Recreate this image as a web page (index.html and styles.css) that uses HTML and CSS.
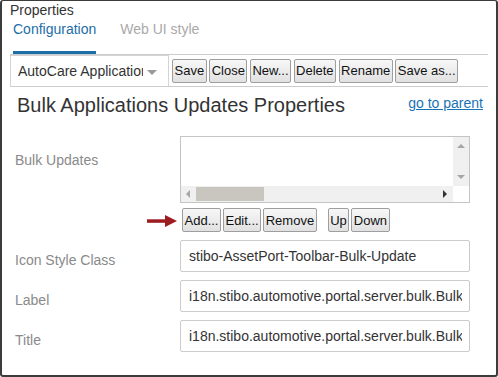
FILE: index.html
```html
<!DOCTYPE html>
<html lang="en">
<head>
    <meta charset="UTF-8">
    <meta name="viewport" content="width=device-width, initial-scale=1.0">
    <title>Properties</title>
    <link rel="stylesheet" href="styles.css">
</head>
<body>
    <div class="window">
        <div class="panel-title">Properties</div>

        <div class="tabs">
            <span class="tab active">Configuration</span>
            <span class="tab">Web UI style</span>
        </div>

        <div class="toolbar">
            <div class="dropdown">
                <span class="dropdown-text">AutoCare Applications</span>
                <span class="dropdown-arrow"></span>
            </div>
            <button class="btn">Save</button>
            <button class="btn">Close</button>
            <button class="btn">New...</button>
            <button class="btn">Delete</button>
            <button class="btn">Rename</button>
            <button class="btn">Save as...</button>
        </div>

        <div class="heading-row">
            <h1>Bulk Applications Updates Properties</h1>
            <a href="#" class="parent-link">go to parent</a>
        </div>

        <div class="form">
            <div class="form-row">
                <label class="field-label list-label">Bulk Updates</label>
                <div class="field">
                    <div class="listbox">
                        <div class="list-area"></div>
                        <div class="vscroll">
                            <span class="arrow arrow-up"></span>
                            <span class="arrow arrow-down"></span>
                        </div>
                        <div class="hscroll">
                            <span class="arrow arrow-left"></span>
                            <span class="thumb"></span>
                            <span class="arrow arrow-right"></span>
                        </div>
                        <div class="corner"></div>
                    </div>
                    <div class="list-buttons">
                        <button class="btn">Add...</button>
                        <button class="btn">Edit...</button>
                        <button class="btn">Remove</button>
                        <button class="btn btn-up">Up</button>
                        <button class="btn">Down</button>
                    </div>
                </div>
            </div>

            <div class="form-row">
                <label class="field-label">Icon Style Class</label>
                <input class="text-input" type="text" readonly value="stibo-AssetPort-Toolbar-Bulk-Update">
            </div>

            <div class="form-row">
                <label class="field-label">Label</label>
                <input class="text-input" type="text" readonly value="i18n.stibo.automotive.portal.server.bulk.BulkApplicationsUpdatesLabel">
            </div>

            <div class="form-row">
                <label class="field-label">Title</label>
                <input class="text-input" type="text" readonly value="i18n.stibo.automotive.portal.server.bulk.BulkApplicationsUpdatesTitle">
            </div>
        </div>

        <!-- annotation arrow pointing at Add... -->
        <svg class="pointer" width="30" height="12" viewBox="0 0 30 12">
            <rect x="0" y="4.3" width="20" height="3.5" fill="#9c1c20"/>
            <polygon points="18,0 30,6 18,12" fill="#9c1c20"/>
        </svg>
    </div>
</body>
</html>
```

FILE: styles.css
```css
:root {
    --blue: #1b6ea8;
    --line: #cccccc;
    --text: #333333;
    --label: #8a8a8a;
}

body {
    margin: 0;
    background: #ffffff;
}

.window {
    position: relative;
    width: 498px;
    height: 377px;
    box-sizing: border-box;
    border: 2px solid #3c3c3c;
    border-top-width: 1px;
    border-radius: 3px;
    overflow: hidden;
    font-family: "Liberation Sans", Arial, sans-serif;
    color: var(--text);
}

.panel-title {
    padding: 1px 0 0 8px;
    font-size: 14px;
    line-height: 16px;
}

/* Tabs */
.tabs {
    display: flex;
    gap: 24px;
    padding: 3px 0 0 11px;
}

.tab {
    font-size: 14px;
    line-height: 16px;
    padding-bottom: 14px;
    border-bottom: 3px solid transparent;
    color: #a9a9a9;
}

.tab.active {
    color: var(--blue);
    border-bottom-color: var(--blue);
}

/* Toolbar */
.toolbar {
    display: flex;
    align-items: center;
    gap: 2.5px;
    height: 31px;
    margin: 0 8px;
    border-top: 1px solid var(--line);
    border-bottom: 1px solid var(--line);
}

.dropdown {
    display: flex;
    align-items: center;
    width: 159px;
    height: 31px;
    box-sizing: border-box;
    border: 1px solid #d4d4d4;
    border-bottom: none;
    padding-left: 7px;
    margin-right: 0.5px;
}

.dropdown-text {
    width: 125px;
    overflow: hidden;
    white-space: nowrap;
    font-size: 14px;
    line-height: 16px;
}

.dropdown-arrow {
    margin-left: 4px;
    margin-top: 2px;
    width: 0;
    height: 0;
    border-left: 5px solid transparent;
    border-right: 5px solid transparent;
    border-top: 5px solid #9a9a9a;
}

.btn {
    height: 24px;
    padding: 0 1.5px;
    font-family: "Liberation Sans", Arial, sans-serif;
    font-size: 13px;
    color: #111;
    background: linear-gradient(#f7f7f7, #e1e1e1);
    border: 1px solid #9e9e9e;
    border-radius: 2px;
    cursor: pointer;
}

/* Heading */
.heading-row {
    display: flex;
    justify-content: space-between;
    align-items: flex-start;
    margin-top: 6px;
    padding: 0 13px 0 15px;
}

h1 {
    margin: 0;
    font-size: 20px;
    line-height: 24px;
    font-weight: normal;
}

.parent-link {
    margin-top: 2px;
    font-size: 14px;
    line-height: 16px;
    color: #1a73b5;
}

/* Form */
.form {
    display: flex;
    flex-direction: column;
    gap: 8px;
    margin-top: 19px;
    padding-left: 13px;
}

.form-row {
    display: flex;
    align-items: flex-start;
}

.field-label {
    width: 165px;
    padding-top: 12px;
    font-size: 14px;
    line-height: 16px;
    color: var(--label);
}

.field-label.list-label {
    padding-top: 16px;
}

.listbox {
    display: grid;
    grid-template-columns: 1fr 16px;
    grid-template-rows: 1fr 16px;
    width: 290px;
    height: 67px;
    box-sizing: border-box;
    border: 1px solid #c4c4c4;
}

.vscroll {
    display: flex;
    flex-direction: column;
    justify-content: space-between;
    align-items: center;
    padding: 7px 0 7px;
    background: #f0f0f0;
}

.hscroll {
    display: flex;
    align-items: center;
    background: #f0f0f0;
    padding: 0 0 0 5px;
}

.thumb {
    width: 68px;
    height: 14px;
    margin-left: 6px;
    background: #c9c5bf;
}

.corner {
    background: #ffffff;
}

.arrow {
    width: 0;
    height: 0;
}

.arrow-up {
    border-left: 4px solid transparent;
    border-right: 4px solid transparent;
    border-bottom: 4px solid #a6a6a6;
}

.arrow-down {
    border-left: 4px solid transparent;
    border-right: 4px solid transparent;
    border-top: 4px solid #a6a6a6;
}

.arrow-left {
    border-top: 4px solid transparent;
    border-bottom: 4px solid transparent;
    border-right: 4px solid #a6a6a6;
}

.arrow-right {
    margin-left: auto;
    margin-right: 6px;
    border-top: 4px solid transparent;
    border-bottom: 4px solid transparent;
    border-left: 4px solid #333;
}

.list-buttons {
    display: flex;
    gap: 2px;
    margin: 5px 0 0 2px;
}

.btn-up {
    margin-left: 9px;
}

.text-input {
    width: 290px;
    height: 32px;
    box-sizing: border-box;
    padding: 0 7px 0 8px;
    border: 1px solid var(--line);
    border-radius: 2px;
    font-family: "Liberation Sans", Arial, sans-serif;
    font-size: 14px;
    color: var(--text);
    outline: none;
}

.pointer {
    position: absolute;
    left: 145px;
    top: 214px;
}
```
